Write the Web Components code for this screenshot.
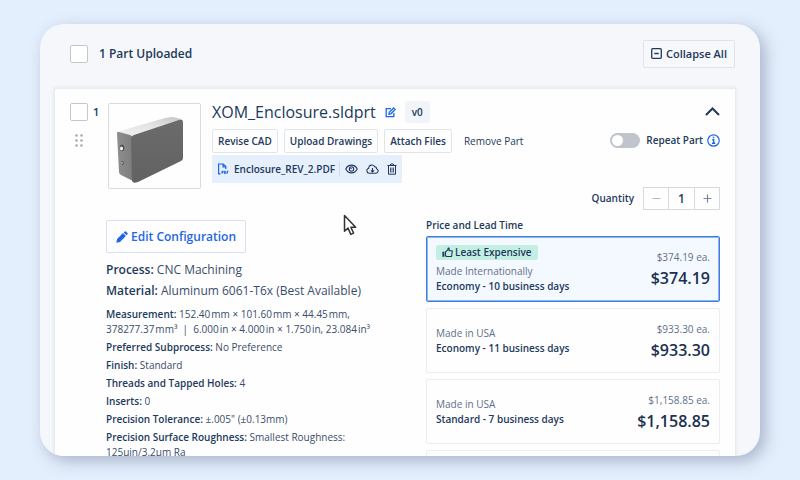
<!DOCTYPE html>
<html lang="en">
<head>
<meta charset="utf-8">
<title>Part quote</title>
<style>
  html { height: 100%; }
  body {
    margin: 0; min-height: 100%; background: #e4effd;
    font-family: "Open Sans", "Noto Sans", sans-serif; font-size: 10px; line-height: 15px; color: #3a4d6b;
    --ink: #22395b; --muted: #61708a; --line: #dfe3ea; --blue: #1e66e5;
  }
</style>
</head>
<body>
<quote-page></quote-page>
<script>
const define = (name, html, setup) => {
  const template = document.createElement('template');
  template.innerHTML = html;
  customElements.define(name, class extends HTMLElement {
    constructor() {
      super();
      this.attachShadow({ mode: 'open' }).append(template.content.cloneNode(true));
    }
    connectedCallback() { if (setup) setup(this, this.shadowRoot); }
  });
};

define('ui-check', `
<style>
  :host { display: block; width: 18px; height: 18px; }
  input { appearance: none; display: block; box-sizing: border-box; width: 18px; height: 18px; margin: 0; border: 1px solid #c3c6cc; border-radius: 2px; background: #fff; }
  input:checked { background: var(--blue); }
</style>
<input type="checkbox">`, (host, root) => {
  root.querySelector('input').setAttribute('aria-label', host.getAttribute('label'));
});

define('ui-button', `
<style>
  :host { display: block; }
  button { font: inherit; font-weight: 600; color: var(--ink); background: var(--button-bg, #fefefe); border: 1px solid var(--line); border-radius: 2px; display: flex; align-items: center; gap: 4px; height: var(--button-height, 24px); padding: 0 var(--button-pad, 5px); white-space: nowrap; }
  :host([large]) { font-size: 11px; --button-height: 28px; --button-pad: 7px; --button-bg: #f6f8fb; }
  :host([primary]) { font-size: 12px; --ink: #1e66e5; --line: #d9e0f5; --button-height: 33px; --button-pad: 9px; }
  :host([primary]) button { gap: 3px; }
  :host([plain]) { --button-pad: 6px; }
  :host([plain]) button { border: 0; background: none; font-weight: 400; }
</style>
<button type="button"><slot></slot></button>`);

define('icon-button', `
<style>
  :host { display: block; }
  button { display: block; padding: 0; border: 0; background: none; color: inherit; }
  ::slotted(svg) { display: block; }
</style>
<button type="button"><slot></slot></button>`, (host, root) => {
  root.querySelector('button').setAttribute('aria-label', host.getAttribute('label'));
});

define('file-chip', `
<style>
  :host { display: flex; align-items: center; box-sizing: border-box; height: 28px; padding: 0 5px; background: #e6effc; font-weight: 600; color: var(--ink); width: max-content; }
  .name { margin: 0 4px 0 5px; }
  .tools { display: flex; align-items: center; gap: 8px; padding-left: 5px; border-left: 1px solid #cfdaea; height: 14px; }
  svg { display: block; }
</style>
<svg width="12" height="12" viewBox="0 0 12 12" fill="none" stroke="#1e66e5" stroke-width="1.2"><path d="M3.5 10.8H1.6V1h4.6l2.6 2.6V6M6 1v3h3"/><path d="M5 8v2.8M5 8.2h1.2v1.2H5M7.6 8.2v2.4h.7V8.2zM10 10.8V8.2h1.4M10 9.5h1" stroke-width="1"/></svg>
<span class="name"><slot></slot></span>
<div class="tools">
  <icon-button label="Preview"><svg width="13" height="12" viewBox="0 0 13 12" fill="none" stroke="#22395b" stroke-width="1.1"><path d="M.8 6C3.200 .8 9.800 .8 12.200 6 9.800 11.200 3.200 11.200 .8 6z"/><circle cx="6.500" cy="6" r="2.200"/><path d="M5.600 6l.9-.9"/></svg></icon-button>
  <icon-button label="Download"><svg width="13" height="12" viewBox="0 0 13 12" fill="none" stroke="#22395b" stroke-width="1.1"><path d="M3.600 10.200h6.300a2.300 2.300 0 0 0 .6-4.500 2 2 0 0 0-2-2.100A3.100 3.100 0 0 0 2.700 5.300a2.500 2.500 0 0 0 .9 4.900z"/><path d="M6.500 5v3.800M4.900 7.300l1.600 1.600 1.600-1.600"/></svg></icon-button>
  <icon-button label="Delete"><svg width="10" height="12" viewBox="0 0 10 12" fill="none" stroke="#22395b" stroke-width="1"><path d="M.5 2.500h9M3.200 2.300L3.800 1h2.400l.6 1.300M1.500 2.700v8.500h7V2.700"/><path d="M3.500 4.500v5M5 4.500v5M6.500 4.500v5" stroke-width=".8"/></svg></icon-button>
</div>`);

define('ui-toggle', `
<style>
  :host { display: block; }
  label { display: flex; align-items: center; gap: 6px; font-weight: 600; color: var(--ink); }
  input { appearance: none; margin: 0; width: 30px; height: 15px; box-sizing: border-box; padding: 2px; border-radius: 8px; background: #c0c4cb; display: flex; }
  input::before { content: ""; width: 11px; height: 11px; border-radius: 50%; background: #fff; }
  input:checked { justify-content: flex-end; background: var(--blue); }
</style>
<label><input type="checkbox" role="switch"><span><slot></slot></span></label>`);

define('qty-stepper', `
<style>
  :host { display: flex; align-items: center; gap: 9px; font-weight: 600; color: var(--ink); }
  .box { display: flex; border: 1px solid #d5dae2; height: 21px; }
  button, input { font: inherit; font-weight: 600; color: inherit; border: 0; padding: 0; margin: 0; background: #fefefe; width: 24px; text-align: center; }
  input { border: solid #d5dae2; border-width: 0 1px; box-sizing: border-box; width: 27px; font-size: 12px; }
  button { display: grid; place-items: center; }
</style>
<label for="q">Quantity</label>
<div class="box">
  <button type="button" aria-label="Decrease"><svg width="9" height="9" viewBox="0 0 9 9"><path d="M.5 4.500h8" stroke="#b4bac4"/></svg></button>
  <input id="q" type="text" inputmode="numeric" value="1">
  <button type="button" aria-label="Increase"><svg width="9" height="9" viewBox="0 0 9 9"><path d="M.5 4.500h8M4.500 .5v8" stroke="#77849a" stroke-width="1.2"/></svg></button>
</div>`);

define('spec-line', `
<style>
  :host { display: block; }
  :host([large]) { font-size: 12px; line-height: 18px; }
  b { font-weight: 600; color: var(--ink); }
</style>
<b></b> <slot></slot>`, (host, root) => {
  root.querySelector('b').textContent = host.getAttribute('name') + ':';
});

define('price-option', `
<style>
  :host { display: block; }
  button { font: inherit; color: inherit; text-align: left; display: flex; width: 100%; min-height: 65px; align-items: center; justify-content: space-between; padding: 0 9px; box-sizing: border-box; border: 1px solid #eaedf1; border-radius: 2px; background: #fefefe; }
  :host([selected]) button { min-height: 66px; border: 1px solid #3e7be2; box-shadow: inset 0 0 0 1px #8fb4f0; background: #f4f9ff; }
  .origin, .each { color: var(--muted); display: block; }
  .each { text-align: right; line-height: 16px; padding-top: 2px; }
  .term { font-weight: 600; color: var(--ink); display: block; }
  .total { font-weight: 600; font-size: 16px; line-height: 26px; color: #1c3050; display: block; text-align: right; }
  ::slotted(price-badge) { margin-bottom: 4px; }
</style>
<button type="button">
  <span><slot></slot><span class="origin"></span><span class="term"></span></span>
  <span><span class="each"></span><span class="total"></span></span>
</button>`, (host, root) => {
  for (const key of ['origin', 'term', 'each', 'total']) root.querySelector('.' + key).textContent = host.getAttribute(key);
  root.querySelector('button').setAttribute('aria-pressed', host.hasAttribute('selected'));
});

define('price-badge', `
<style>
  :host { display: flex; align-items: center; gap: 2px; width: max-content; padding: 0 6px; background: #c3efe3; border-radius: 2px; font-weight: 600; color: var(--ink); }
  svg { display: block; }
</style>
<svg width="11" height="11" viewBox="0 0 11 11" fill="none" stroke="#22395b" stroke-width="1.1" stroke-linejoin="round"><path d="M3.500 5L5.800 2.900 6.100 1h1v2.800h3.200L9.600 9.500H4.500l-1-.7z"/><path d="M.4 4.800h2v5h-2z" fill="#22395b" stroke="none"/></svg>
<slot></slot>`);

define('part-thumb', `
<style>
  :host { display: block; box-sizing: border-box; width: 93px; height: 86px; border: 1px solid #d8dbe0; border-radius: 2px; background: #fefefe; }
  svg { display: block; }
</style>
<svg width="91" height="84" viewBox="0 0 91 84" role="img" aria-label="Enclosure model">
  <defs>
    <linearGradient id="t" x1="0" y1="1" x2="1" y2="0"><stop offset="0" stop-color="#f2f2f2"/><stop offset=".6" stop-color="#e2e2e2"/><stop offset="1" stop-color="#c4c4c4"/></linearGradient>
    <linearGradient id="f" x1="0" y1="0" x2="0" y2="1"><stop offset="0" stop-color="#6b6b6b"/><stop offset="1" stop-color="#626262"/></linearGradient>
    <linearGradient id="s" x1="0" y1="0" x2="1" y2="0"><stop offset="0" stop-color="#8f8f8f"/><stop offset="1" stop-color="#7b7b7b"/></linearGradient>
  </defs>
  <path d="M8 30Q8 28 11 27L56 14Q61 13 64 13L72 15Q74 16 73 18L25 34 10 32z" fill="url(#t)"/>
  <path d="M8 30Q8 27 10 28L21 31Q24 32 24 36L26 78 12 71Q10 70 10 68z" fill="url(#s)"/>
  <path d="M22 35Q22 32 25 31L70 16Q74 15 74 18V54Q74 56 72 57L29 78Q24 80 23 77z" fill="url(#f)"/>
  <ellipse cx="13" cy="44" rx="2.300" ry="3.200" fill="#4d4d4d"/><ellipse cx="12.500" cy="44.500" rx="1.500" ry="2" fill="#f2f2f2"/>
  <ellipse cx="13.500" cy="59" rx="1.500" ry="2" fill="#5b5b5b"/><circle cx="13" cy="59" r=".8" fill="#ddd"/>
</svg>`);

define('part-card', `
<style>
  :host { display: block; box-sizing: border-box; background: #fefefe; border: 1px solid #e8ebf0; box-shadow: 0 0 3px rgba(60,80,110,.12); padding: 14px 15px; }
  svg { display: block; }
  .top { display: flex; height: 108px; }
  .select { display: grid; grid-template-columns: 18px 20px; row-gap: 13px; align-content: start; }
  .num { font-weight: 600; font-size: 11px; line-height: 18px; padding-left: 5px; color: var(--ink); }
  .grip { justify-self: center; }
  .info { flex: 1; padding-left: 11px; }
  .title { display: flex; align-items: center; gap: 9px; height: 22px; margin: -2px 0 6px; }
  h2 { font-size: 16px; line-height: 22px; font-weight: 400; margin: 0; color: var(--ink); }
  .rev { font-weight: 600; line-height: 22px; padding: 0 7px; background: #f1f4f8; border-radius: 2px; color: var(--ink); }
  .actions { display: flex; gap: 6px; margin-bottom: 2px; }
  .side { display: flex; flex-direction: column; align-items: flex-end; padding-top: 4px; }
  .repeat { display: flex; align-items: center; gap: 4px; margin: 17px 0 39px; }
  .body { display: grid; grid-template-columns: 320px 1fr; padding-left: 36px; margin-top: 7px; align-items: start; }
  .specs { display: flex; flex-direction: column; gap: 3px; padding: 2px 52px 0 0; }
  .specs ui-button { align-self: flex-start; margin-bottom: 5px; }
  .gap { margin-bottom: 4px; }
  h3 { font-size: 10px; line-height: 15px; font-weight: 600; margin: 0 0 3px; color: var(--ink); }
  .prices { display: flex; flex-direction: column; gap: 6px; }
</style>
<div class="top">
  <div class="select">
    <ui-check label="Select part 1"></ui-check><span class="num">1</span>
    <svg class="grip" width="8" height="13" viewBox="0 0 8 13" fill="#a5abb5"><circle cx="1.500" cy="1.500" r="1.300"/><circle cx="6.500" cy="1.500" r="1.300"/><circle cx="1.500" cy="6.500" r="1.300"/><circle cx="6.500" cy="6.500" r="1.300"/><circle cx="1.500" cy="11.500" r="1.300"/><circle cx="6.500" cy="11.500" r="1.300"/></svg>
  </div>
  <part-thumb></part-thumb>
  <div class="info">
    <div class="title">
      <h2>XOM_Enclosure.sldprt</h2>
      <icon-button label="Rename"><svg width="11" height="11" viewBox="0 0 11 11" fill="none" stroke="#1e66e5" stroke-width="1.3"><path d="M6 1.700H1.200v8h7.600V6"/><path d="M4 7.200l.3-1.900L8.600 1l1.500 1.500L5.900 6.800z"/></svg></icon-button>
      <span class="rev">v0</span>
    </div>
    <div class="actions"><ui-button>Revise CAD</ui-button><ui-button>Upload Drawings</ui-button><ui-button>Attach Files</ui-button><ui-button plain>Remove Part</ui-button></div>
    <file-chip>Enclosure_REV_2.PDF</file-chip>
  </div>
  <div class="side">
    <icon-button label="Collapse part"><svg width="15" height="9" viewBox="0 0 15 9" fill="none" stroke="#22395b" stroke-width="2"><path d="M1 8l6.500-6.500L14 8"/></svg></icon-button>
    <div class="repeat"><ui-toggle>Repeat Part</ui-toggle>
      <icon-button label="About repeat parts"><svg width="13" height="13" viewBox="0 0 13 13" fill="none" stroke="#1e66e5" stroke-width="1.200"><circle cx="6.500" cy="6.500" r="5.700"/><path d="M5.200 5.700h1.500v3.600M4.900 9.300h3.400M6.500 2.800v1.500" stroke-width="1.400"/></svg></icon-button></div>
    <qty-stepper></qty-stepper>
  </div>
</div>
<div class="body">
  <div class="specs">
    <ui-button primary><svg width="12" height="12" viewBox="0 0 12 12" fill="#1e66e5"><path d="M.3 11.700L1.100 8l5.900-5.900 2.900 2.900L4 10.900zM7.700 1.400L8.700.5q.6-.5 1.200 0l1.600 1.600q.5.6 0 1.200l-.9 1z"/></svg>Edit Configuration</ui-button>
    <spec-line large name="Process">CNC Machining</spec-line>
    <spec-line large name="Material" class="gap">Aluminum 6061-T6x (Best Available)</spec-line>
    <spec-line name="Measurement">152.40&#8202;mm × 101.60&#8202;mm × 44.45&#8202;mm, 378277.37&#8202;mm³ &nbsp;|&nbsp; 6.000&#8202;in × 4.000&#8202;in × 1.750&#8202;in, 23.084&#8202;in³</spec-line>
    <spec-line name="Preferred Subprocess">No Preference</spec-line>
    <spec-line name="Finish">Standard</spec-line>
    <spec-line name="Threads and Tapped Holes">4</spec-line>
    <spec-line name="Inserts">0</spec-line>
    <spec-line name="Precision Tolerance">±.005" (±0.13mm)</spec-line>
    <spec-line name="Precision Surface Roughness">Smallest Roughness: 125µin/3.2µm Ra</spec-line>
  </div>
  <div>
    <h3>Price and Lead Time</h3>
    <div class="prices">
      <price-option selected origin="Made Internationally" term="Economy - 10 business days" each="$374.19 ea." total="$374.19"><price-badge>Least Expensive</price-badge></price-option>
      <price-option origin="Made in USA" term="Economy - 11 business days" each="$933.30 ea." total="$933.30"></price-option>
      <price-option origin="Made in USA" term="Standard - 7 business days" each="$1,158.85 ea." total="$1,158.85"></price-option>
      <price-option></price-option>
    </div>
  </div>
</div>`);

define('quote-page', `
<style>
  :host { display: flex; box-sizing: border-box; height: 100vh; padding: 24px 40px; position: relative; }
  main { flex: 1; overflow: hidden; border-radius: 24px; background: #f5f7fa; box-shadow: 5px 5px 16px rgba(70,85,120,.38); }
  header { display: flex; align-items: center; box-sizing: border-box; height: 64px; padding: 0 25px 5px 30px; gap: 11px; }
  h1 { flex: 1; margin: 0; font-size: 12px; line-height: 18px; font-weight: 600; color: var(--ink); }
  part-card { margin: 0 24px 0 14px; }
  svg { display: block; }
  .pointer { position: absolute; left: 343px; top: 214px; }
</style>
<main>
  <header>
    <ui-check label="Select all parts"></ui-check>
    <h1>1 Part Uploaded</h1>
    <ui-button large><svg width="11" height="11" viewBox="0 0 11 11" fill="none" stroke="#22395b" stroke-width="1.300"><rect x=".7" y=".7" width="9.600" height="9.600" rx="1"/><path d="M3.300 5.500h4.400"/></svg>Collapse All</ui-button>
  </header>
  <part-card></part-card>
</main>
<svg class="pointer" width="15" height="23" viewBox="0 0 15 23" fill="#fff" stroke="#333" stroke-width="1.500" stroke-linejoin="round"><path d="M1.500 1.500v15.800l3.500-3.200 2.800 6.300 2.800-1.300-2.700-5.900h4.800z"/></svg>`);
</script>
</body>
</html>
